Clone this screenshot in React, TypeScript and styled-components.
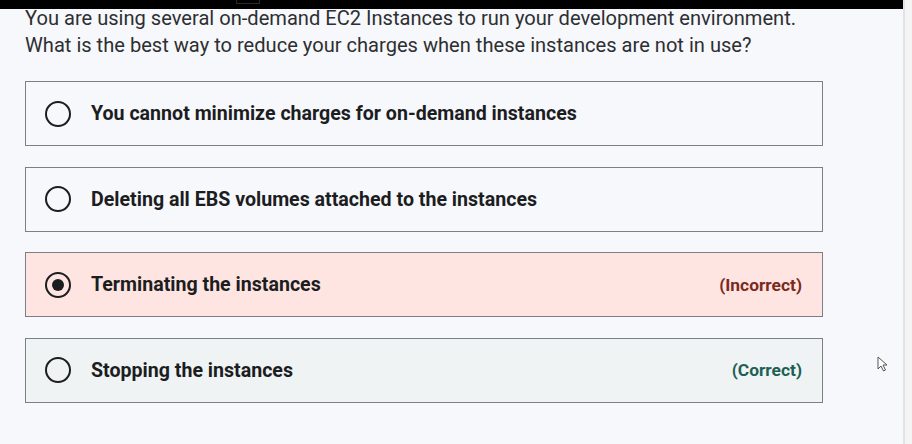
import React from "react";
import styled, { createGlobalStyle } from "styled-components";

const Global = createGlobalStyle`
  html, body { margin: 0; padding: 0; }
  body {
    background: #f7f8fc;
    font-family: Roboto, "Liberation Sans", Arial, sans-serif;
    -webkit-font-smoothing: antialiased;
  }
`;

const Page = styled.div`
  display: flex;
  height: 444px;
  width: 912px;
  overflow: hidden;
  position: relative;
`;

const Main = styled.div`
  flex: 1;
  display: flex;
  flex-direction: column;
  background: #f7f8fc;
`;

const TopBar = styled.div`
  height: 9px;
  background: #000;
  flex-shrink: 0;
  display: flex;
  position: relative;
  z-index: 1;
`;

const TopTab = styled.div`
  margin-left: 236px;
  width: 22px;
  height: 3px;
  border: 1px solid #2a2a2a;
  border-top: none;
`;

const Content = styled.div`
  padding-left: 25px;
  display: flex;
  flex-direction: column;
`;

const Question = styled.div`
  margin-top: -4px;
  font-size: 20.1px;
  line-height: 27px;
  color: #2d2f31;
  width: 860px;
`;

const Options = styled.div`
  margin-top: 22px;
  display: flex;
  flex-direction: column;
  gap: 20.5px;
  width: 798px;
`;

type Variant = "plain" | "incorrect" | "correct";

const bgFor: Record<Variant, string> = {
  plain: "#f7f8fc",
  incorrect: "#ffe5e2",
  correct: "#eff3f4",
};

const Option = styled.div<{ $variant: Variant }>`
  box-sizing: border-box;
  height: 65px;
  border: 1px solid #7c7f83;
  background: ${(p) => bgFor[p.$variant]};
  display: flex;
  align-items: center;
  padding: 0 20px 0 19px;
`;

const Radio = styled.span<{ $checked?: boolean }>`
  box-sizing: border-box;
  width: 26px;
  height: 26px;
  border-radius: 50%;
  border: 2.5px solid #1c1d1f;
  display: flex;
  align-items: center;
  justify-content: center;
  flex-shrink: 0;
  &::after {
    content: "";
    display: ${(p) => (p.$checked ? "block" : "none")};
    width: 12px;
    height: 12px;
    border-radius: 50%;
    background: #1c1d1f;
  }
`;

const Label = styled.span`
  margin-left: 20px;
  flex: 1;
  font-size: 19.6px;
  font-weight: 700;
  color: #1c1d1f;
`;

const Verdict = styled.span<{ $ok: boolean }>`
  font-size: 17.4px;
  font-weight: 700;
  color: ${(p) => (p.$ok ? "#1d5f54" : "#7b2a1f")};
`;

const Scroll = styled.div`
  width: 7px;
  border-left: 2px solid #e3e3e5;
  background: #f4f4f5;
`;

const Cursor = styled.svg`
  position: absolute;
  left: 877px;
  top: 356px;
`;

const options: { text: string; variant: Variant; checked?: boolean; verdict?: string }[] = [
  { text: "You cannot minimize charges for on-demand instances", variant: "plain" },
  { text: "Deleting all EBS volumes attached to the instances", variant: "plain" },
  { text: "Terminating the instances", variant: "incorrect", checked: true, verdict: "(Incorrect)" },
  { text: "Stopping the instances", variant: "correct", verdict: "(Correct)" },
];

export default function App() {
  return (
    <>
      <Global />
      <Page>
        <Main>
          <TopBar>
            <TopTab />
          </TopBar>
          <Content>
            <Question>
              You are using several on-demand EC2 Instances to run your development environment.
              <br />
              What is the best way to reduce your charges when these instances are not in use?
            </Question>
            <Options>
              {options.map((o) => (
                <Option key={o.text} $variant={o.variant}>
                  <Radio $checked={o.checked} />
                  <Label>{o.text}</Label>
                  {o.verdict && <Verdict $ok={o.variant === "correct"}>{o.verdict}</Verdict>}
                </Option>
              ))}
            </Options>
          </Content>
        </Main>
        <Scroll />
        <Cursor width="12" height="16" viewBox="0 0 12 16">
          <path
            d="M1 1 L1 13 L4 10 L6.5 15 L8.5 14 L6 9 L10 9 Z"
            fill="#fff"
            stroke="#555"
            strokeWidth="1"
            strokeLinejoin="round"
          />
        </Cursor>
      </Page>
    </>
  );
}
